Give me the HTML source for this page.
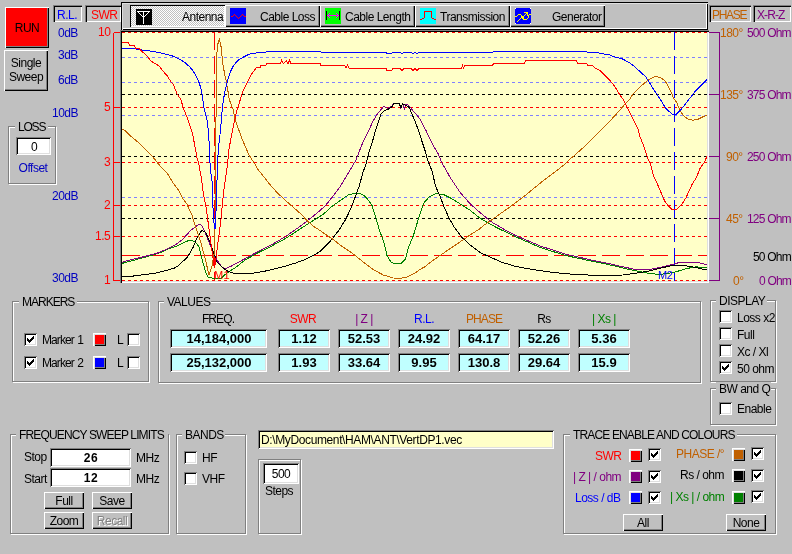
<!DOCTYPE html><html><head><meta charset="utf-8"><style>html,body{margin:0;padding:0;width:792px;height:554px;overflow:hidden;background:#c0c0c0;}body{position:relative;font-family:"Liberation Sans",sans-serif;font-size:11px;}.t{position:absolute;white-space:pre;line-height:12px;will-change:transform;}.b{position:absolute;box-sizing:border-box;}svg.b{overflow:visible}</style></head><body>
<div class="b" style="left:5px;top:7px;width:44px;height:41px;background:#ff0000;box-shadow:inset 1px 1px 0 #fff, inset -1px -1px 0 #000, inset -2px -2px 0 #808080;"></div>
<div class="t" style="top:22px;color:#000;font-size:12px;font-weight:400;letter-spacing:-0.5px;left:-73px;width:200px;text-align:center;">RUN</div>
<div class="b" style="left:4px;top:50px;width:44px;height:41px;background:#c0c0c0;box-shadow:inset 1px 1px 0 #fff, inset -1px -1px 0 #000, inset -2px -2px 0 #808080;"></div>
<div class="t" style="top:57px;color:#000;font-size:12px;font-weight:400;letter-spacing:-0.5px;left:-74px;width:200px;text-align:center;">Single</div>
<div class="t" style="top:71px;color:#000;font-size:12px;font-weight:400;letter-spacing:-0.5px;left:-74px;width:200px;text-align:center;">Sweep</div>
<div class="b" style="left:53px;top:5px;width:29px;height:17px;box-shadow:inset 1px 1px 0 #808080, inset 2px 2px 0 #000, inset -1px -1px 0 #fff;"></div>
<div class="t" style="top:9px;color:#0000ff;font-size:12px;font-weight:400;letter-spacing:-0.5px;left:57px;">R.L.</div>
<div class="b" style="left:85px;top:5px;width:36px;height:17px;box-shadow:inset 1px 1px 0 #808080, inset 2px 2px 0 #000, inset -1px -1px 0 #fff;"></div>
<div class="t" style="top:9px;color:#ff0000;font-size:12px;font-weight:400;letter-spacing:-0.5px;left:91px;">SWR</div>
<div class="b" style="left:709px;top:5px;width:42px;height:17px;box-shadow:inset 1px 1px 0 #808080, inset 2px 2px 0 #000, inset -1px -1px 0 #fff;"></div>
<div class="t" style="top:9px;color:#c06000;font-size:12px;font-weight:400;letter-spacing:-1.3px;left:712px;">PHASE</div>
<div class="b" style="left:753px;top:5px;width:38px;height:17px;box-shadow:inset 1px 1px 0 #808080, inset 2px 2px 0 #000, inset -1px -1px 0 #fff;"></div>
<div class="t" style="top:9px;color:#800080;font-size:12px;font-weight:400;letter-spacing:-0.9px;left:757px;">X-R-Z</div>
<div class="b" style="left:121px;top:2px;width:587px;height:28px;background:#c0c0c0;box-shadow:inset 1px 1px 0 #000, inset 2px 2px 0 #dfdfdf, inset -1px -1px 0 #000, inset -2px -2px 0 #fff;"></div>
<div class="b" style="left:130px;top:5px;width:95px;height:22px;background-color:#fff;background-image:linear-gradient(45deg,#c0c0c0 25%,transparent 25%,transparent 75%,#c0c0c0 75%),linear-gradient(45deg,#c0c0c0 25%,transparent 25%,transparent 75%,#c0c0c0 75%);background-size:2px 2px;background-position:0 0,1px 1px;box-shadow:inset 1px 1px 0 #000, inset -1px -1px 0 #fff;"></div>
<svg class="b" style="left:136px;top:9px" width="16" height="16" shape-rendering="crispEdges"><rect width="16" height="16" fill="#000"/><g fill="#fff"><rect x="1" y="2" width="1" height="1"/><rect x="2" y="2" width="1" height="1"/><rect x="3" y="2" width="1" height="1"/><rect x="4" y="2" width="1" height="1"/><rect x="5" y="2" width="1" height="1"/><rect x="6" y="2" width="1" height="1"/><rect x="7" y="2" width="1" height="1"/><rect x="8" y="2" width="1" height="1"/><rect x="9" y="2" width="1" height="1"/><rect x="10" y="2" width="1" height="1"/><rect x="11" y="2" width="1" height="1"/><rect x="12" y="2" width="1" height="1"/><rect x="13" y="2" width="1" height="1"/><rect x="7" y="2" width="1" height="1"/><rect x="7" y="3" width="1" height="1"/><rect x="7" y="4" width="1" height="1"/><rect x="7" y="5" width="1" height="1"/><rect x="7" y="6" width="1" height="1"/><rect x="7" y="7" width="1" height="1"/><rect x="7" y="8" width="1" height="1"/><rect x="7" y="9" width="1" height="1"/><rect x="7" y="10" width="1" height="1"/><rect x="7" y="11" width="1" height="1"/><rect x="7" y="12" width="1" height="1"/><rect x="7" y="13" width="1" height="1"/><rect x="7" y="14" width="1" height="1"/><rect x="2" y="3" width="1" height="1"/><rect x="3" y="4" width="1" height="1"/><rect x="4" y="5" width="1" height="1"/><rect x="5" y="6" width="1" height="1"/><rect x="6" y="7" width="1" height="1"/><rect x="12" y="3" width="1" height="1"/><rect x="11" y="4" width="1" height="1"/><rect x="10" y="5" width="1" height="1"/><rect x="9" y="6" width="1" height="1"/><rect x="8" y="7" width="1" height="1"/></g></svg>
<div class="t" style="top:11px;color:#000;font-size:12px;font-weight:400;letter-spacing:-0.5px;left:182px;">Antenna</div>
<div class="b" style="left:225px;top:5px;width:95px;height:22px;background:#c0c0c0;box-shadow:inset 1px 1px 0 #fff, inset -1px -1px 0 #000, inset -2px -2px 0 #808080;"></div>
<div class="b" style="left:320px;top:5px;width:95px;height:22px;background:#c0c0c0;box-shadow:inset 1px 1px 0 #fff, inset -1px -1px 0 #000, inset -2px -2px 0 #808080;"></div>
<div class="b" style="left:415px;top:5px;width:95px;height:22px;background:#c0c0c0;box-shadow:inset 1px 1px 0 #fff, inset -1px -1px 0 #000, inset -2px -2px 0 #808080;"></div>
<div class="b" style="left:510px;top:5px;width:95px;height:22px;background:#c0c0c0;box-shadow:inset 1px 1px 0 #fff, inset -1px -1px 0 #000, inset -2px -2px 0 #808080;"></div>
<svg class="b" style="left:230px;top:8px" width="16" height="16" shape-rendering="crispEdges"><rect width="16" height="16" fill="#0000ff"/><g fill="#ff0000"><rect x="1" y="8" width="1" height="1"/><rect x="2" y="8" width="1" height="1"/><rect x="2" y="8" width="1" height="1"/><rect x="3" y="7" width="1" height="1"/><rect x="4" y="6" width="1" height="1"/><rect x="4" y="6" width="1" height="1"/><rect x="5" y="7" width="1" height="1"/><rect x="6" y="8" width="1" height="1"/><rect x="7" y="9" width="1" height="1"/><rect x="8" y="10" width="1" height="1"/><rect x="8" y="10" width="1" height="1"/><rect x="9" y="9" width="1" height="1"/><rect x="10" y="8" width="1" height="1"/><rect x="11" y="7" width="1" height="1"/><rect x="12" y="6" width="1" height="1"/><rect x="12" y="6" width="1" height="1"/><rect x="13" y="7" width="1" height="1"/><rect x="14" y="8" width="1" height="1"/><rect x="14" y="8" width="1" height="1"/><rect x="15" y="8" width="1" height="1"/></g></svg>
<div class="t" style="top:11px;color:#000;font-size:12px;font-weight:400;letter-spacing:-0.5px;left:260px;">Cable Loss</div>
<svg class="b" style="left:325px;top:8px" width="16" height="16" shape-rendering="crispEdges"><rect width="16" height="16" fill="#00ff00"/><g fill="#000"><rect x="1" y="3" width="1" height="1"/><rect x="1" y="4" width="1" height="1"/><rect x="1" y="5" width="1" height="1"/><rect x="1" y="6" width="1" height="1"/><rect x="1" y="7" width="1" height="1"/><rect x="1" y="8" width="1" height="1"/><rect x="1" y="9" width="1" height="1"/><rect x="1" y="10" width="1" height="1"/><rect x="1" y="11" width="1" height="1"/><rect x="14" y="3" width="1" height="1"/><rect x="14" y="4" width="1" height="1"/><rect x="14" y="5" width="1" height="1"/><rect x="14" y="6" width="1" height="1"/><rect x="14" y="7" width="1" height="1"/><rect x="14" y="8" width="1" height="1"/><rect x="14" y="9" width="1" height="1"/><rect x="14" y="10" width="1" height="1"/><rect x="14" y="11" width="1" height="1"/></g></svg>
<svg class="b" style="left:325px;top:8px" width="16" height="16" shape-rendering="crispEdges"><g fill="#ff00ff"><rect x="2" y="7" width="1" height="1"/><rect x="3" y="7" width="1" height="1"/><rect x="4" y="7" width="1" height="1"/><rect x="5" y="7" width="1" height="1"/><rect x="6" y="7" width="1" height="1"/><rect x="7" y="7" width="1" height="1"/><rect x="8" y="7" width="1" height="1"/><rect x="9" y="7" width="1" height="1"/><rect x="10" y="7" width="1" height="1"/><rect x="11" y="7" width="1" height="1"/><rect x="12" y="7" width="1" height="1"/><rect x="13" y="7" width="1" height="1"/><rect x="3" y="6" width="1" height="1"/><rect x="3" y="8" width="1" height="1"/><rect x="4" y="5" width="1" height="1"/><rect x="4" y="9" width="1" height="1"/><rect x="12" y="6" width="1" height="1"/><rect x="12" y="8" width="1" height="1"/><rect x="11" y="5" width="1" height="1"/><rect x="11" y="9" width="1" height="1"/></g></svg>
<div class="t" style="top:11px;color:#000;font-size:12px;font-weight:400;letter-spacing:-0.5px;left:345px;">Cable Length</div>
<svg class="b" style="left:420px;top:8px" width="16" height="16" shape-rendering="crispEdges"><rect width="16" height="16" fill="#00ffff"/><g fill="#ff0000"><rect x="0" y="11" width="1" height="1"/><rect x="1" y="11" width="1" height="1"/><rect x="2" y="10" width="1" height="1"/><rect x="3" y="10" width="1" height="1"/><rect x="4" y="9" width="1" height="1"/><rect x="4" y="8" width="1" height="1"/><rect x="4" y="7" width="1" height="1"/><rect x="4" y="6" width="1" height="1"/><rect x="4" y="5" width="1" height="1"/><rect x="4" y="4" width="1" height="1"/><rect x="4" y="3" width="1" height="1"/><rect x="4" y="3" width="1" height="1"/><rect x="5" y="3" width="1" height="1"/><rect x="6" y="3" width="1" height="1"/><rect x="7" y="3" width="1" height="1"/><rect x="8" y="3" width="1" height="1"/><rect x="9" y="3" width="1" height="1"/><rect x="10" y="3" width="1" height="1"/><rect x="11" y="3" width="1" height="1"/><rect x="11" y="3" width="1" height="1"/><rect x="11" y="4" width="1" height="1"/><rect x="11" y="5" width="1" height="1"/><rect x="11" y="6" width="1" height="1"/><rect x="11" y="7" width="1" height="1"/><rect x="11" y="8" width="1" height="1"/><rect x="11" y="9" width="1" height="1"/><rect x="12" y="10" width="1" height="1"/><rect x="13" y="10" width="1" height="1"/><rect x="14" y="11" width="1" height="1"/><rect x="15" y="11" width="1" height="1"/></g></svg>
<div class="t" style="top:11px;color:#000;font-size:12px;font-weight:400;letter-spacing:-0.5px;left:440px;">Transmission</div>
<svg class="b" style="left:515px;top:8px" width="16" height="16" shape-rendering="crispEdges"><rect width="16" height="16" fill="#0000ff"/><rect x="0" y="0" width="1" height="1" fill="#fff"/><rect x="15" y="0" width="1" height="1" fill="#fff"/><rect x="0" y="15" width="1" height="1" fill="#fff"/><rect x="15" y="15" width="1" height="1" fill="#fff"/><g fill="#ffff00"><rect x="0" y="8" width="1" height="1"/><rect x="1" y="8" width="1" height="1"/><rect x="1" y="8" width="1" height="1"/><rect x="2" y="7" width="1" height="1"/><rect x="3" y="6" width="1" height="1"/><rect x="3" y="6" width="1" height="1"/><rect x="4" y="6" width="1" height="1"/><rect x="5" y="6" width="1" height="1"/><rect x="5" y="6" width="1" height="1"/><rect x="6" y="7" width="1" height="1"/><rect x="6" y="7" width="1" height="1"/><rect x="6" y="8" width="1" height="1"/><rect x="7" y="9" width="1" height="1"/><rect x="7" y="9" width="1" height="1"/><rect x="8" y="10" width="1" height="1"/><rect x="8" y="11" width="1" height="1"/><rect x="8" y="11" width="1" height="1"/><rect x="9" y="11" width="1" height="1"/><rect x="10" y="11" width="1" height="1"/><rect x="11" y="11" width="1" height="1"/><rect x="11" y="11" width="1" height="1"/><rect x="12" y="10" width="1" height="1"/><rect x="13" y="9" width="1" height="1"/><rect x="13" y="9" width="1" height="1"/><rect x="13" y="8" width="1" height="1"/><rect x="13" y="7" width="1" height="1"/><rect x="13" y="7" width="1" height="1"/><rect x="14" y="6" width="1" height="1"/><rect x="14" y="6" width="1" height="1"/><rect x="15" y="6" width="1" height="1"/><rect x="7" y="8" width="1" height="1"/><rect x="7" y="9" width="1" height="1"/><rect x="7" y="10" width="1" height="1"/><rect x="7" y="10" width="1" height="1"/><rect x="6" y="9" width="1" height="1"/><rect x="6" y="9" width="1" height="1"/><rect x="7" y="9" width="1" height="1"/><rect x="8" y="9" width="1" height="1"/><rect x="2" y="13" width="1" height="1"/><rect x="3" y="12" width="1" height="1"/><rect x="4" y="11" width="1" height="1"/><rect x="5" y="10" width="1" height="1"/><rect x="8" y="8" width="1" height="1"/><rect x="9" y="7" width="1" height="1"/><rect x="10" y="6" width="1" height="1"/><rect x="11" y="5" width="1" height="1"/><rect x="9" y="4" width="1" height="1"/><rect x="10" y="4" width="1" height="1"/><rect x="11" y="4" width="1" height="1"/><rect x="12" y="4" width="1" height="1"/><rect x="11" y="5" width="1" height="1"/><rect x="12" y="5" width="1" height="1"/><rect x="12" y="6" width="1" height="1"/><rect x="12" y="7" width="1" height="1"/></g></svg>
<div class="t" style="top:11px;color:#000;font-size:12px;font-weight:400;letter-spacing:-0.5px;left:552px;">Generator</div>
<div class="b" style="left:120px;top:30px;width:589px;height:253px;background:#ffffc8;box-shadow:inset 1px 1px 0 #808080, inset 2px 2px 0 #000, inset -1px -1px 0 #fff, inset -2px -2px 0 #dfdfdf;"></div>
<svg class="b" style="left:120px;top:30px" width="589" height="253" viewBox="120 30 589 253">
<defs><clipPath id="c"><rect x="122" y="32" width="585" height="249"/></clipPath></defs>
<g clip-path="url(#c)" shape-rendering="crispEdges">
<line x1="122" y1="57.5" x2="707" y2="57.5" stroke="#8080ff" stroke-width="1" stroke-dasharray="3 3" stroke-dashoffset="0"/>
<line x1="122" y1="82.5" x2="707" y2="82.5" stroke="#8080ff" stroke-width="1" stroke-dasharray="3 3" stroke-dashoffset="0"/>
<line x1="122" y1="115.5" x2="707" y2="115.5" stroke="#8080ff" stroke-width="1" stroke-dasharray="3 3" stroke-dashoffset="0"/>
<line x1="122" y1="197.5" x2="707" y2="197.5" stroke="#8080ff" stroke-width="1" stroke-dasharray="3 3" stroke-dashoffset="0"/>
<line x1="122" y1="94.5" x2="707" y2="94.5" stroke="#000" stroke-width="1" stroke-dasharray="3 3" stroke-dashoffset="0"/>
<line x1="122" y1="156.5" x2="707" y2="156.5" stroke="#000" stroke-width="1" stroke-dasharray="3 3" stroke-dashoffset="0"/>
<line x1="122" y1="218.5" x2="707" y2="218.5" stroke="#000" stroke-width="1" stroke-dasharray="3 3" stroke-dashoffset="0"/>
<line x1="122" y1="32.5" x2="707" y2="32.5" stroke="#ff0000" stroke-width="1" stroke-dasharray="3 3" stroke-dashoffset="0"/>
<line x1="122" y1="107.5" x2="707" y2="107.5" stroke="#ff0000" stroke-width="1" stroke-dasharray="3 3" stroke-dashoffset="0"/>
<line x1="122" y1="162.5" x2="707" y2="162.5" stroke="#ff0000" stroke-width="1" stroke-dasharray="3 3" stroke-dashoffset="0"/>
<line x1="122" y1="205.5" x2="707" y2="205.5" stroke="#ff0000" stroke-width="1" stroke-dasharray="3 3" stroke-dashoffset="0"/>
<line x1="122" y1="236.5" x2="707" y2="236.5" stroke="#ff0000" stroke-width="1" stroke-dasharray="3 3" stroke-dashoffset="0"/>
<line x1="122" y1="280.5" x2="707" y2="280.5" stroke="#ff0000" stroke-width="1" stroke-dasharray="3 3" stroke-dashoffset="0"/>
<line x1="122" y1="255.5" x2="707" y2="255.5" stroke="#ff0000" stroke-width="1" stroke-dasharray="18 6" stroke-dashoffset="0"/>
<line x1="214.5" y1="32" x2="214.5" y2="281" stroke="#ff0000" stroke-width="1" stroke-dasharray="18 6"/>
<line x1="674.5" y1="32" x2="674.5" y2="281" stroke="#0000ff" stroke-width="1" stroke-dasharray="18 6"/>
</g>
<g clip-path="url(#c)" fill="none" stroke-width="1" shape-rendering="crispEdges">
<polyline points="122.0,263.4 137.7,259.2 157.9,253.6 168.0,249.1 176.9,246.0 185.7,241.5 190.0,240.3 195.1,241.5 198.9,246.6 201.4,256.7 205.2,270.6 207.7,276.9 212.8,278.1 217.8,278.8 221.6,278.1 225.4,274.3 230.5,270.6 235.0,268.0 245.2,259.9 257.8,252.9 271.7,246.0 285.6,238.4 298.3,230.2 310.9,222.0 318.5,217.5 323.6,214.0 331.3,206.8 337.6,202.4 344.0,197.9 348.4,194.8 356.6,193.1 360.4,193.5 365.5,196.7 371.8,204.9 375.6,216.9 379.4,230.0 384.4,244.1 387.0,255.5 390.7,261.8 393.9,263.3 400.9,263.7 405.3,259.2 408.4,247.9 413.5,235.2 418.6,218.2 422.3,206.8 423.8,203.0 428.8,197.3 436.4,193.5 444.0,194.8 451.6,198.6 461.7,204.9 470.6,210.6 478.2,216.9 488.3,223.2 498.4,228.5 508.5,233.3 515.0,236.5 540.3,247.5 565.6,255.5 590.9,261.0 610.0,264.9 629.0,269.4 647.9,273.2 658.0,274.4 665.6,273.8 675.7,271.9 685.9,268.7 696.0,266.8 706.7,267.8" stroke="#008000"/>
<polyline points="122.0,262.4 127.6,260.5 137.7,258.2 147.8,255.7 157.9,252.9 166.8,249.1 175.6,244.7 183.2,239.0 190.0,231.0 195.1,227.0 198.9,224.1 202.0,225.7 205.8,234.0 210.3,245.3 214.7,256.7 221.6,266.8 225.4,268.7 230.5,266.5 245.2,258.6 257.8,251.7 271.7,244.7 285.6,236.5 298.3,227.6 305.9,221.9 314.7,215.0 318.5,211.8 325.0,206.1 332.6,196.7 340.2,186.5 345.2,178.3 351.5,167.6 356.0,160.0 357.6,155.7 362.6,143.0 367.7,132.9 372.8,121.5 376.5,115.2 381.0,109.5 383.5,106.6 385.4,107.0 387.9,108.3 391.7,106.4 393.0,103.8 399.3,103.8 400.6,107.6 402.5,103.8 404.4,108.9 405.6,104.5 408.2,105.1 410.7,107.6 413.2,111.4 417.0,115.2 420.8,120.3 425.9,130.4 429.6,138.0 433.4,145.6 438.5,154.4 441.5,162.0 450.3,177.7 460.5,192.9 470.6,204.2 480.7,213.1 490.8,221.5 503.4,228.9 506.0,230.5 515.0,235.2 540.3,246.0 565.6,254.2 590.9,259.9 610.0,263.8 622.6,266.8 635.3,269.4 650.5,269.4 663.1,266.8 673.2,264.3 679.5,262.4 697.2,262.4 706.7,264.6" stroke="#800080"/>
<polyline points="122.0,276.6 131.4,276.3 145.3,274.4 155.4,273.2 165.5,270.6 174.4,268.1 179.4,264.9 183.2,261.1 187.0,257.4 190.0,252.9 193.2,247.2 197.6,236.5 202.0,230.2 205.8,232.7 210.3,242.8 214.7,255.4 216.6,261.7 221.6,266.8 226.7,270.6 230.5,272.4 235.1,273.4 252.8,273.2 267.9,270.6 283.1,266.8 295.7,263.0 305.9,259.2 314.7,254.8 319.8,251.7 324.8,246.6 329.9,241.5 332.6,238.4 338.9,230.2 345.2,220.1 347.8,215.0 351.5,206.8 355.3,196.7 359.1,186.5 362.9,172.6 366.4,163.0 369.0,151.9 372.1,143.0 374.7,132.9 377.2,125.3 381.0,114.0 384.1,110.8 387.9,109.5 391.7,107.0 393.6,103.8 399.3,103.8 401.0,108.0 402.5,103.8 405.6,105.1 409.4,107.6 411.9,114.0 415.7,122.8 418.9,131.7 422.1,141.8 425.9,153.2 427.6,160.0 432.6,172.6 435.2,185.3 440.2,196.7 444.0,206.8 449.1,218.2 454.1,227.0 461.7,237.1 470.6,245.3 480.7,252.9 490.8,257.4 502.2,262.4 515.0,266.2 527.6,268.7 540.3,270.6 552.9,272.5 571.9,274.2 595.9,275.4 614.9,275.4 622.6,275.0 635.3,273.2 647.9,271.3 660.6,268.1 673.2,265.3 682.1,265.3 692.2,266.8 706.7,270.0" stroke="#000000"/>
<polyline points="122.0,129.1 125.1,130.4 131.4,136.7 139.0,143.0 145.3,149.4 151.6,155.7 155.4,160.0 157.9,163.3 160.5,166.3 166.8,172.6 173.1,182.8 179.4,191.6 183.2,199.2 187.0,204.2 192.1,215.6 195.2,225.7 200.2,240.3 205.0,258.0 209.0,275.0 212.1,265.5 214.3,252.9 215.0,230.0 215.3,200.0 215.4,151.9 216.4,95.0 216.5,59.1 217.5,45.2 219.3,39.5 221.3,47.7 222.6,62.9 224.7,74.2 226.6,83.1 228.1,92.0 229.4,100.0 232.9,108.9 235.4,120.3 241.7,138.0 248.7,154.4 252.1,160.0 255.6,165.0 256.5,167.6 261.6,173.9 270.5,185.3 278.0,193.5 285.6,200.5 297.0,210.6 302.1,215.0 305.9,219.4 313.4,226.4 318.5,229.5 325.0,234.0 332.6,239.0 341.4,246.0 352.8,253.6 362.9,261.8 373.0,269.4 383.2,275.0 393.3,278.0 400.9,278.2 407.2,277.0 416.0,272.5 420.0,269.4 424.9,266.8 430.1,262.4 442.8,253.6 457.9,243.4 470.6,234.6 479.4,229.0 483.2,225.8 495.9,216.9 498.4,215.0 508.5,208.0 515.0,203.0 520.0,199.5 527.6,193.5 541.5,182.1 555.5,171.4 564.0,165.0 568.7,160.0 574.1,155.7 584.2,146.8 590.6,140.5 598.2,132.9 607.0,124.1 615.9,114.6 624.7,104.5 629.2,100.0 632.3,95.0 636.3,90.7 641.4,85.6 647.7,80.6 652.8,77.4 656.5,76.5 661.0,77.8 664.8,80.6 667.9,85.6 671.1,92.0 673.6,98.3 676.7,102.6 679.8,110.2 683.6,115.8 688.0,119.0 693.1,120.3 698.1,119.2 703.2,116.7 707.0,115.2" stroke="#c06000"/>
<polyline points="122.0,48.6 134.5,48.6 139.0,49.6 149.7,50.9 156.7,52.1 162.4,53.4 170.6,55.3 175.6,57.2 179.4,59.1 185.7,63.1 189.5,66.7 192.7,70.5 195.9,75.5 198.4,80.6 200.3,86.3 201.9,93.2 202.2,95.0 204.1,108.9 207.2,120.3 208.5,132.9 209.6,150.0 210.2,168.9 212.1,181.6 212.7,202.4 213.7,220.0 214.6,228.5 215.5,228.0 215.5,220.0 216.5,203.0 217.1,176.5 217.8,158.8 218.3,149.4 220.2,132.9 222.1,111.4 223.4,100.0 225.3,89.4 227.6,80.6 230.4,71.7 233.6,65.4 238.0,60.3 243.0,57.2 248.1,54.7 251.9,53.4 255.7,53.4 256.5,52.5 265.8,52.5 266.5,51.5 320.8,51.5 321.5,52.5 386.0,52.5 386.5,53.4 391.8,53.4 392.5,52.5 400.0,52.5 402.0,53.4 404.0,52.5 411.0,52.5 413.0,53.4 415.0,52.5 417.0,53.4 419.0,52.5 492.8,52.5 493.5,51.5 586.8,51.5 587.5,52.5 597.6,52.5 600.0,53.4 609.6,55.0 614.6,56.8 622.2,58.8 628.6,62.2 634.9,66.7 641.4,73.0 645.2,76.1 649.0,81.8 652.8,88.2 656.5,93.5 661.5,101.3 665.3,107.6 669.1,111.4 672.9,114.6 676.0,114.6 680.5,110.2 685.5,103.8 692.4,95.0 694.5,92.0 699.5,86.9 707.0,79.3" stroke="#0000ff"/>
<polyline points="122.0,42.5 128.5,42.5 129.5,45.4 134.5,45.4 135.5,48.3 139.0,48.5 142.8,52.1 146.5,55.3 150.3,60.3 154.1,63.1 159.2,66.0 163.0,71.1 167.4,76.1 170.6,81.2 173.7,85.0 176.9,93.8 180.7,99.0 183.2,107.6 187.0,117.1 190.2,126.6 192.7,134.2 195.2,148.1 197.1,158.2 198.8,163.9 201.5,179.0 202.6,187.9 203.4,194.1 205.8,205.6 206.3,208.0 207.9,220.7 214.0,265.5 214.5,266.5 215.0,265.5 220.9,220.0 222.2,205.6 224.1,187.9 227.2,167.0 229.1,148.1 231.6,135.5 234.1,122.8 236.7,111.4 241.7,95.0 242.4,92.0 246.8,83.1 250.6,75.5 252.5,73.0 256.3,67.9 260.1,67.9 261.0,65.4 265.8,65.4 266.5,63.5 280.3,63.5 281.6,60.5 283.5,63.5 286.3,60.5 288.0,63.5 289.5,60.5 291.0,63.5 320.2,63.5 321.0,65.4 344.8,65.4 346.0,67.9 347.5,65.4 349.0,68.2 386.0,68.2 387.0,70.5 391.8,70.5 392.5,68.2 400.0,68.2 402.0,70.5 404.0,68.2 411.0,68.2 413.0,70.5 415.0,68.2 417.0,70.5 419.0,68.2 461.5,68.2 462.5,65.4 463.5,68.2 465.0,65.4 492.5,65.4 493.5,63.5 524.5,63.5 525.5,60.6 576.5,60.6 577.5,63.5 586.6,63.5 587.5,65.4 592.5,65.4 595.0,67.9 598.2,69.4 600.7,71.1 604.5,74.9 608.3,78.7 612.1,83.1 615.9,88.2 619.7,94.5 623.5,100.0 627.2,107.6 631.0,115.2 634.8,122.8 638.0,129.1 640.0,136.7 644.5,148.0 647.6,158.1 650.5,163.8 653.6,176.4 657.4,184.0 660.6,191.6 664.4,200.5 667.5,204.9 672.0,209.3 676.4,209.3 681.4,204.9 685.9,197.9 692.2,184.0 696.0,178.3 700.4,167.6 704.2,162.5 705.4,160.0 707.0,156.2" stroke="#ff0000"/>
</g>
</svg>
<svg class="b" style="left:105px;top:28px" width="20" height="260"><g shape-rendering="crispEdges" stroke="#ff0000" stroke-width="1"><path d="M8.5 4.5h6M8.5 4.5v248M8.5 252.5h6M8.5 79.5h6M8.5 134.5h6M8.5 177.5h6M8.5 208.5h6" fill="none"/></g></svg>
<svg class="b" style="left:705px;top:28px" width="20" height="260"><g shape-rendering="crispEdges" stroke="#800080" stroke-width="1"><path d="M4 4.5h10.5v248H4M4 66.5h10M4 128.5h10M4 190.5h10" fill="none"/></g></svg>
<div class="t" style="left:214px;top:269px;color:#ff0000;font-size:11px;letter-spacing:0.3px">M1</div>
<div class="t" style="left:658px;top:269px;color:#0000ff;font-size:11px;letter-spacing:-0.3px">M2</div>
<div class="t" style="top:27px;color:#0000c0;font-size:12px;font-weight:400;letter-spacing:-0.5px;right:714px;">0dB</div>
<div class="t" style="top:49px;color:#0000c0;font-size:12px;font-weight:400;letter-spacing:-0.5px;right:714px;">3dB</div>
<div class="t" style="top:74px;color:#0000c0;font-size:12px;font-weight:400;letter-spacing:-0.5px;right:714px;">6dB</div>
<div class="t" style="top:107px;color:#0000c0;font-size:12px;font-weight:400;letter-spacing:-0.5px;right:714px;">10dB</div>
<div class="t" style="top:190px;color:#0000c0;font-size:12px;font-weight:400;letter-spacing:-0.5px;right:714px;">20dB</div>
<div class="t" style="top:272px;color:#0000c0;font-size:12px;font-weight:400;letter-spacing:-0.5px;right:714px;">30dB</div>
<div class="t" style="top:26px;color:#ff0000;font-size:12px;font-weight:400;letter-spacing:-0.5px;right:682px;">10</div>
<div class="t" style="top:101px;color:#ff0000;font-size:12px;font-weight:400;letter-spacing:-0.5px;right:682px;">5</div>
<div class="t" style="top:156px;color:#ff0000;font-size:12px;font-weight:400;letter-spacing:-0.5px;right:682px;">3</div>
<div class="t" style="top:199px;color:#ff0000;font-size:12px;font-weight:400;letter-spacing:-0.5px;right:682px;">2</div>
<div class="t" style="top:230px;color:#ff0000;font-size:12px;font-weight:400;letter-spacing:-0.5px;right:682px;">1.5</div>
<div class="t" style="top:274px;color:#ff0000;font-size:12px;font-weight:400;letter-spacing:-0.5px;right:682px;">1</div>
<div class="t" style="top:27px;color:#c06000;font-size:12px;font-weight:400;letter-spacing:-0.5px;right:49px;">180°</div>
<div class="t" style="top:27px;color:#800080;font-size:12px;font-weight:400;letter-spacing:-0.8px;right:1px;">500 Ohm</div>
<div class="t" style="top:89px;color:#c06000;font-size:12px;font-weight:400;letter-spacing:-0.5px;right:49px;">135°</div>
<div class="t" style="top:89px;color:#800080;font-size:12px;font-weight:400;letter-spacing:-0.8px;right:1px;">375 Ohm</div>
<div class="t" style="top:151px;color:#c06000;font-size:12px;font-weight:400;letter-spacing:-0.5px;right:49px;">90°</div>
<div class="t" style="top:151px;color:#800080;font-size:12px;font-weight:400;letter-spacing:-0.8px;right:1px;">250 Ohm</div>
<div class="t" style="top:213px;color:#c06000;font-size:12px;font-weight:400;letter-spacing:-0.5px;right:49px;">45°</div>
<div class="t" style="top:213px;color:#800080;font-size:12px;font-weight:400;letter-spacing:-0.8px;right:1px;">125 Ohm</div>
<div class="t" style="top:275px;color:#c06000;font-size:12px;font-weight:400;letter-spacing:-0.5px;right:49px;">0°</div>
<div class="t" style="top:275px;color:#800080;font-size:12px;font-weight:400;letter-spacing:-0.8px;right:1px;">0 Ohm</div>
<div class="t" style="top:251px;color:#000;font-size:12px;font-weight:400;letter-spacing:-0.8px;right:1px;">50 Ohm</div>
<div class="b" style="left:8px;top:126px;width:48px;height:58px;border:1px solid #808080;border-width:1px 1px 1px 1px;box-shadow:inset 1px 1px 0 #fff, 1px 1px 0 #fff;box-sizing:border-box"></div>
<div class="b" style="left:15px;top:120px;width:33px;height:10px;background:#c0c0c0"></div>
<div class="t" style="top:121px;color:#000;font-size:12px;font-weight:400;letter-spacing:-1.2px;left:18px;">LOSS</div>
<div class="b" style="left:16px;top:137px;width:35px;height:18px;background:#fff;box-shadow:inset 1px 1px 0 #808080, inset -1px -1px 0 #fff, inset 2px 2px 0 #000, inset -2px -2px 0 #dfdfdf;"></div>
<div class="t" style="top:141px;color:#000;font-size:12px;font-weight:400;letter-spacing:-0.5px;left:-66.5px;width:200px;text-align:center;">0</div>
<div class="t" style="top:162px;color:#0000c0;font-size:12px;font-weight:400;letter-spacing:-0.5px;left:-67px;width:200px;text-align:center;">Offset</div>
<div class="b" style="left:12px;top:301px;width:137px;height:81px;border:1px solid #808080;border-width:1px 1px 1px 1px;box-shadow:inset 1px 1px 0 #fff, 1px 1px 0 #fff;box-sizing:border-box"></div>
<div class="b" style="left:19px;top:295px;width:58px;height:10px;background:#c0c0c0"></div>
<div class="t" style="top:296px;color:#000;font-size:12px;font-weight:400;letter-spacing:-1.0px;left:22px;">MARKERS</div>
<div class="b" style="left:24px;top:333px;width:13px;height:13px;background:#fff;box-shadow:inset 1px 1px 0 #808080, inset -1px -1px 0 #fff, inset 2px 2px 0 #000, inset -2px -2px 0 #dfdfdf;"></div>
<svg class="b" style="left:24px;top:333px" width="13" height="13" viewBox="0 0 13 13" shape-rendering="crispEdges"><path d="M9 3h1v1h-1zM8 4h2v1h-2zM3 5h1v1h-1zM7 5h3v1h-3zM3 6h2v1h-2zM6 6h3v1h-3zM3 7h5v1h-5zM4 8h3v1h-3zM5 9h1v1h-1z" fill="#000"/></svg>
<div class="t" style="top:334px;color:#000;font-size:12px;font-weight:400;letter-spacing:-0.9px;left:42px;word-spacing:1px;">Marker 1</div>
<div class="b" style="left:93px;top:333px;width:13px;height:13px;background:#ff0000;box-shadow:inset 1px 1px 0 #fff, inset 2px 2px 0 #dfdfdf, inset -1px -1px 0 #000, inset -2px -2px 0 #808080;"></div>
<div class="t" style="top:334px;color:#000;font-size:12px;font-weight:400;letter-spacing:-0.5px;left:117px;">L</div>
<div class="b" style="left:127px;top:333px;width:13px;height:13px;background:#fff;box-shadow:inset 1px 1px 0 #808080, inset -1px -1px 0 #fff, inset 2px 2px 0 #000, inset -2px -2px 0 #dfdfdf;"></div>
<div class="b" style="left:24px;top:356px;width:13px;height:13px;background:#fff;box-shadow:inset 1px 1px 0 #808080, inset -1px -1px 0 #fff, inset 2px 2px 0 #000, inset -2px -2px 0 #dfdfdf;"></div>
<svg class="b" style="left:24px;top:356px" width="13" height="13" viewBox="0 0 13 13" shape-rendering="crispEdges"><path d="M9 3h1v1h-1zM8 4h2v1h-2zM3 5h1v1h-1zM7 5h3v1h-3zM3 6h2v1h-2zM6 6h3v1h-3zM3 7h5v1h-5zM4 8h3v1h-3zM5 9h1v1h-1z" fill="#000"/></svg>
<div class="t" style="top:357px;color:#000;font-size:12px;font-weight:400;letter-spacing:-0.9px;left:42px;word-spacing:1px;">Marker 2</div>
<div class="b" style="left:93px;top:356px;width:13px;height:13px;background:#0000ff;box-shadow:inset 1px 1px 0 #fff, inset 2px 2px 0 #dfdfdf, inset -1px -1px 0 #000, inset -2px -2px 0 #808080;"></div>
<div class="t" style="top:357px;color:#000;font-size:12px;font-weight:400;letter-spacing:-0.5px;left:117px;">L</div>
<div class="b" style="left:127px;top:356px;width:13px;height:13px;background:#fff;box-shadow:inset 1px 1px 0 #808080, inset -1px -1px 0 #fff, inset 2px 2px 0 #000, inset -2px -2px 0 #dfdfdf;"></div>
<div class="b" style="left:158px;top:301px;width:543px;height:82px;border:1px solid #808080;border-width:1px 1px 1px 1px;box-shadow:inset 1px 1px 0 #fff, 1px 1px 0 #fff;box-sizing:border-box"></div>
<div class="b" style="left:164px;top:295px;width:47px;height:10px;background:#c0c0c0"></div>
<div class="t" style="top:296px;color:#000;font-size:12px;font-weight:400;letter-spacing:-0.5px;left:167px;">VALUES</div>
<div class="t" style="top:313px;color:#000;font-size:12px;font-weight:400;letter-spacing:-0.9px;left:118px;width:200px;text-align:center;">FREQ.</div>
<div class="t" style="top:313px;color:#ff0000;font-size:12px;font-weight:400;letter-spacing:-0.5px;left:203px;width:200px;text-align:center;">SWR</div>
<div class="t" style="top:313px;color:#800080;font-size:12px;font-weight:400;letter-spacing:-0.5px;left:264px;width:200px;text-align:center;">| Z |</div>
<div class="t" style="top:313px;color:#0000ff;font-size:12px;font-weight:400;letter-spacing:-0.5px;left:324px;width:200px;text-align:center;">R.L.</div>
<div class="t" style="top:313px;color:#c06000;font-size:12px;font-weight:400;letter-spacing:-0.9px;left:384px;width:200px;text-align:center;">PHASE</div>
<div class="t" style="top:313px;color:#000;font-size:12px;font-weight:400;letter-spacing:-0.5px;left:444px;width:200px;text-align:center;">Rs</div>
<div class="t" style="top:313px;color:#008000;font-size:12px;font-weight:400;letter-spacing:-0.5px;left:504px;width:200px;text-align:center;">| Xs |</div>
<div class="b" style="left:170px;top:329px;width:97px;height:19px;background:#c0ffff;box-shadow:inset 1px 1px 0 #808080, inset -1px -1px 0 #fff, inset 2px 2px 0 #000, inset -2px -2px 0 #dfdfdf;"></div>
<div class="t" style="top:333px;color:#000;font-size:13px;font-weight:700;left:118.5px;width:200px;text-align:center;">14,184,000</div>
<div class="b" style="left:278px;top:329px;width:52px;height:19px;background:#c0ffff;box-shadow:inset 1px 1px 0 #808080, inset -1px -1px 0 #fff, inset 2px 2px 0 #000, inset -2px -2px 0 #dfdfdf;"></div>
<div class="t" style="top:333px;color:#000;font-size:13px;font-weight:700;left:204.0px;width:200px;text-align:center;">1.12</div>
<div class="b" style="left:338px;top:329px;width:52px;height:19px;background:#c0ffff;box-shadow:inset 1px 1px 0 #808080, inset -1px -1px 0 #fff, inset 2px 2px 0 #000, inset -2px -2px 0 #dfdfdf;"></div>
<div class="t" style="top:333px;color:#000;font-size:13px;font-weight:700;left:264.0px;width:200px;text-align:center;">52.53</div>
<div class="b" style="left:398px;top:329px;width:52px;height:19px;background:#c0ffff;box-shadow:inset 1px 1px 0 #808080, inset -1px -1px 0 #fff, inset 2px 2px 0 #000, inset -2px -2px 0 #dfdfdf;"></div>
<div class="t" style="top:333px;color:#000;font-size:13px;font-weight:700;left:324.0px;width:200px;text-align:center;">24.92</div>
<div class="b" style="left:458px;top:329px;width:52px;height:19px;background:#c0ffff;box-shadow:inset 1px 1px 0 #808080, inset -1px -1px 0 #fff, inset 2px 2px 0 #000, inset -2px -2px 0 #dfdfdf;"></div>
<div class="t" style="top:333px;color:#000;font-size:13px;font-weight:700;left:384.0px;width:200px;text-align:center;">64.17</div>
<div class="b" style="left:518px;top:329px;width:52px;height:19px;background:#c0ffff;box-shadow:inset 1px 1px 0 #808080, inset -1px -1px 0 #fff, inset 2px 2px 0 #000, inset -2px -2px 0 #dfdfdf;"></div>
<div class="t" style="top:333px;color:#000;font-size:13px;font-weight:700;left:444.0px;width:200px;text-align:center;">52.26</div>
<div class="b" style="left:578px;top:329px;width:52px;height:19px;background:#c0ffff;box-shadow:inset 1px 1px 0 #808080, inset -1px -1px 0 #fff, inset 2px 2px 0 #000, inset -2px -2px 0 #dfdfdf;"></div>
<div class="t" style="top:333px;color:#000;font-size:13px;font-weight:700;left:504.0px;width:200px;text-align:center;">5.36</div>
<div class="b" style="left:170px;top:353px;width:97px;height:19px;background:#c0ffff;box-shadow:inset 1px 1px 0 #808080, inset -1px -1px 0 #fff, inset 2px 2px 0 #000, inset -2px -2px 0 #dfdfdf;"></div>
<div class="t" style="top:357px;color:#000;font-size:13px;font-weight:700;left:118.5px;width:200px;text-align:center;">25,132,000</div>
<div class="b" style="left:278px;top:353px;width:52px;height:19px;background:#c0ffff;box-shadow:inset 1px 1px 0 #808080, inset -1px -1px 0 #fff, inset 2px 2px 0 #000, inset -2px -2px 0 #dfdfdf;"></div>
<div class="t" style="top:357px;color:#000;font-size:13px;font-weight:700;left:204.0px;width:200px;text-align:center;">1.93</div>
<div class="b" style="left:338px;top:353px;width:52px;height:19px;background:#c0ffff;box-shadow:inset 1px 1px 0 #808080, inset -1px -1px 0 #fff, inset 2px 2px 0 #000, inset -2px -2px 0 #dfdfdf;"></div>
<div class="t" style="top:357px;color:#000;font-size:13px;font-weight:700;left:264.0px;width:200px;text-align:center;">33.64</div>
<div class="b" style="left:398px;top:353px;width:52px;height:19px;background:#c0ffff;box-shadow:inset 1px 1px 0 #808080, inset -1px -1px 0 #fff, inset 2px 2px 0 #000, inset -2px -2px 0 #dfdfdf;"></div>
<div class="t" style="top:357px;color:#000;font-size:13px;font-weight:700;left:324.0px;width:200px;text-align:center;">9.95</div>
<div class="b" style="left:458px;top:353px;width:52px;height:19px;background:#c0ffff;box-shadow:inset 1px 1px 0 #808080, inset -1px -1px 0 #fff, inset 2px 2px 0 #000, inset -2px -2px 0 #dfdfdf;"></div>
<div class="t" style="top:357px;color:#000;font-size:13px;font-weight:700;left:384.0px;width:200px;text-align:center;">130.8</div>
<div class="b" style="left:518px;top:353px;width:52px;height:19px;background:#c0ffff;box-shadow:inset 1px 1px 0 #808080, inset -1px -1px 0 #fff, inset 2px 2px 0 #000, inset -2px -2px 0 #dfdfdf;"></div>
<div class="t" style="top:357px;color:#000;font-size:13px;font-weight:700;left:444.0px;width:200px;text-align:center;">29.64</div>
<div class="b" style="left:578px;top:353px;width:52px;height:19px;background:#c0ffff;box-shadow:inset 1px 1px 0 #808080, inset -1px -1px 0 #fff, inset 2px 2px 0 #000, inset -2px -2px 0 #dfdfdf;"></div>
<div class="t" style="top:357px;color:#000;font-size:13px;font-weight:700;left:504.0px;width:200px;text-align:center;">15.9</div>
<div class="b" style="left:710px;top:300px;width:66px;height:82px;border:1px solid #808080;border-width:1px 1px 1px 1px;box-shadow:inset 1px 1px 0 #fff, 1px 1px 0 #fff;box-sizing:border-box"></div>
<div class="b" style="left:716px;top:294px;width:51px;height:10px;background:#c0c0c0"></div>
<div class="t" style="top:295px;color:#000;font-size:12px;font-weight:400;letter-spacing:-0.5px;left:719px;">DISPLAY</div>
<div class="b" style="left:719px;top:310px;width:13px;height:13px;background:#fff;box-shadow:inset 1px 1px 0 #808080, inset -1px -1px 0 #fff, inset 2px 2px 0 #000, inset -2px -2px 0 #dfdfdf;"></div>
<div class="t" style="top:312px;color:#000;font-size:12px;font-weight:400;letter-spacing:-0.5px;left:737px;">Loss x2</div>
<div class="b" style="left:719px;top:327px;width:13px;height:13px;background:#fff;box-shadow:inset 1px 1px 0 #808080, inset -1px -1px 0 #fff, inset 2px 2px 0 #000, inset -2px -2px 0 #dfdfdf;"></div>
<div class="t" style="top:329px;color:#000;font-size:12px;font-weight:400;letter-spacing:-0.5px;left:737px;">Full</div>
<div class="b" style="left:719px;top:344px;width:13px;height:13px;background:#fff;box-shadow:inset 1px 1px 0 #808080, inset -1px -1px 0 #fff, inset 2px 2px 0 #000, inset -2px -2px 0 #dfdfdf;"></div>
<div class="t" style="top:346px;color:#000;font-size:12px;font-weight:400;letter-spacing:-0.5px;left:737px;">Xc / Xl</div>
<div class="b" style="left:719px;top:361px;width:13px;height:13px;background:#fff;box-shadow:inset 1px 1px 0 #808080, inset -1px -1px 0 #fff, inset 2px 2px 0 #000, inset -2px -2px 0 #dfdfdf;"></div>
<svg class="b" style="left:719px;top:361px" width="13" height="13" viewBox="0 0 13 13" shape-rendering="crispEdges"><path d="M9 3h1v1h-1zM8 4h2v1h-2zM3 5h1v1h-1zM7 5h3v1h-3zM3 6h2v1h-2zM6 6h3v1h-3zM3 7h5v1h-5zM4 8h3v1h-3zM5 9h1v1h-1z" fill="#000"/></svg>
<div class="t" style="top:363px;color:#000;font-size:12px;font-weight:400;letter-spacing:-0.5px;left:737px;">50 ohm</div>
<div class="b" style="left:710px;top:388px;width:66px;height:37px;border:1px solid #808080;border-width:1px 1px 1px 1px;box-shadow:inset 1px 1px 0 #fff, 1px 1px 0 #fff;box-sizing:border-box"></div>
<div class="b" style="left:716px;top:382px;width:55px;height:10px;background:#c0c0c0"></div>
<div class="t" style="top:383px;color:#000;font-size:12px;font-weight:400;letter-spacing:-0.5px;left:719px;">BW and Q</div>
<div class="b" style="left:719px;top:402px;width:13px;height:13px;background:#fff;box-shadow:inset 1px 1px 0 #808080, inset -1px -1px 0 #fff, inset 2px 2px 0 #000, inset -2px -2px 0 #dfdfdf;"></div>
<div class="t" style="top:403px;color:#000;font-size:12px;font-weight:400;letter-spacing:-0.5px;left:737px;">Enable</div>
<div class="b" style="left:10px;top:434px;width:159px;height:100px;border:1px solid #808080;border-width:1px 1px 1px 1px;box-shadow:inset 1px 1px 0 #fff, 1px 1px 0 #fff;box-sizing:border-box"></div>
<div class="b" style="left:16px;top:428px;width:152px;height:10px;background:#c0c0c0"></div>
<div class="t" style="top:429px;color:#000;font-size:12px;font-weight:400;letter-spacing:-0.85px;left:19px;">FREQUENCY SWEEP LIMITS</div>
<div class="t" style="top:451px;color:#000;font-size:12px;font-weight:400;letter-spacing:-0.5px;left:24px;">Stop</div>
<div class="b" style="left:50px;top:448px;width:81px;height:19px;background:#fff;box-shadow:inset 1px 1px 0 #808080, inset -1px -1px 0 #fff, inset 2px 2px 0 #000, inset -2px -2px 0 #dfdfdf;"></div>
<div class="t" style="top:452px;color:#000;font-size:12px;font-weight:700;letter-spacing:0.6px;left:-9px;width:200px;text-align:center;">26</div>
<div class="t" style="top:452px;color:#000;font-size:12px;font-weight:400;letter-spacing:-0.5px;left:136px;">MHz</div>
<div class="t" style="top:473px;color:#000;font-size:12px;font-weight:400;letter-spacing:-0.5px;left:24px;">Start</div>
<div class="b" style="left:50px;top:468px;width:81px;height:19px;background:#fff;box-shadow:inset 1px 1px 0 #808080, inset -1px -1px 0 #fff, inset 2px 2px 0 #000, inset -2px -2px 0 #dfdfdf;"></div>
<div class="t" style="top:472px;color:#000;font-size:12px;font-weight:700;letter-spacing:0.6px;left:-9px;width:200px;text-align:center;">12</div>
<div class="t" style="top:473px;color:#000;font-size:12px;font-weight:400;letter-spacing:-0.5px;left:136px;">MHz</div>
<div class="b" style="left:44px;top:492px;width:40px;height:17px;background:#c0c0c0;box-shadow:inset 1px 1px 0 #fff, inset -1px -1px 0 #000, inset -2px -2px 0 #808080;"></div>
<div class="t" style="top:495px;color:#000;font-size:12px;font-weight:400;letter-spacing:-0.5px;left:-36px;width:200px;text-align:center;">Full</div>
<div class="b" style="left:92px;top:492px;width:40px;height:17px;background:#c0c0c0;box-shadow:inset 1px 1px 0 #fff, inset -1px -1px 0 #000, inset -2px -2px 0 #808080;"></div>
<div class="t" style="top:495px;color:#000;font-size:12px;font-weight:400;letter-spacing:-0.5px;left:12px;width:200px;text-align:center;">Save</div>
<div class="b" style="left:44px;top:512px;width:40px;height:17px;background:#c0c0c0;box-shadow:inset 1px 1px 0 #fff, inset -1px -1px 0 #000, inset -2px -2px 0 #808080;"></div>
<div class="t" style="top:515px;color:#000;font-size:12px;font-weight:400;letter-spacing:-0.5px;left:-36px;width:200px;text-align:center;">Zoom</div>
<div class="b" style="left:92px;top:512px;width:40px;height:17px;background:#c0c0c0;box-shadow:inset 1px 1px 0 #fff, inset -1px -1px 0 #000, inset -2px -2px 0 #808080;"></div>
<div class="t" style="top:516px;color:#fff;font-size:12px;font-weight:400;letter-spacing:-0.5px;left:13px;width:200px;text-align:center;">Recall</div>
<div class="t" style="top:515px;color:#808080;font-size:12px;font-weight:400;letter-spacing:-0.5px;left:12px;width:200px;text-align:center;">Recall</div>
<div class="b" style="left:176px;top:434px;width:70px;height:100px;border:1px solid #808080;border-width:1px 1px 1px 1px;box-shadow:inset 1px 1px 0 #fff, 1px 1px 0 #fff;box-sizing:border-box"></div>
<div class="b" style="left:182px;top:428px;width:43px;height:10px;background:#c0c0c0"></div>
<div class="t" style="top:429px;color:#000;font-size:12px;font-weight:400;letter-spacing:-0.5px;left:185px;">BANDS</div>
<div class="b" style="left:184px;top:451px;width:13px;height:13px;background:#fff;box-shadow:inset 1px 1px 0 #808080, inset -1px -1px 0 #fff, inset 2px 2px 0 #000, inset -2px -2px 0 #dfdfdf;"></div>
<div class="t" style="top:452px;color:#000;font-size:12px;font-weight:400;letter-spacing:-0.5px;left:202px;">HF</div>
<div class="b" style="left:184px;top:472px;width:13px;height:13px;background:#fff;box-shadow:inset 1px 1px 0 #808080, inset -1px -1px 0 #fff, inset 2px 2px 0 #000, inset -2px -2px 0 #dfdfdf;"></div>
<div class="t" style="top:473px;color:#000;font-size:12px;font-weight:400;letter-spacing:-0.5px;left:202px;">VHF</div>
<div class="b" style="left:258px;top:430px;width:296px;height:19px;background:#ffffc8;box-shadow:inset 1px 1px 0 #808080, inset -1px -1px 0 #fff, inset 2px 2px 0 #000, inset -2px -2px 0 #dfdfdf;"></div>
<div class="t" style="top:434px;color:#000;font-size:12px;font-weight:400;letter-spacing:-0.38px;left:261px;">D:\MyDocument\HAM\ANT\VertDP1.vec</div>
<div class="b" style="left:258px;top:459px;width:43px;height:75px;border:1px solid #808080;border-width:1px 1px 1px 1px;box-shadow:inset 1px 1px 0 #fff, 1px 1px 0 #fff;box-sizing:border-box"></div>
<div class="b" style="left:263px;top:463px;width:36px;height:21px;background:#fff;box-shadow:inset 1px 1px 0 #808080, inset -1px -1px 0 #fff, inset 2px 2px 0 #000, inset -2px -2px 0 #dfdfdf;"></div>
<div class="t" style="top:468px;color:#000;font-size:12px;font-weight:400;letter-spacing:-0.5px;left:181px;width:200px;text-align:center;">500</div>
<div class="t" style="top:485px;color:#000;font-size:12px;font-weight:400;letter-spacing:-0.5px;left:179px;width:200px;text-align:center;">Steps</div>
<div class="b" style="left:563px;top:434px;width:213px;height:100px;border:1px solid #808080;border-width:1px 1px 1px 1px;box-shadow:inset 1px 1px 0 #fff, 1px 1px 0 #fff;box-sizing:border-box"></div>
<div class="b" style="left:570px;top:428px;width:167px;height:10px;background:#c0c0c0"></div>
<div class="t" style="top:429px;color:#000;font-size:12px;font-weight:400;letter-spacing:-0.85px;left:573px;">TRACE ENABLE AND COLOURS</div>
<div class="t" style="top:450px;color:#ff0000;font-size:12px;font-weight:400;letter-spacing:-0.5px;right:171px;">SWR</div>
<div class="b" style="left:629px;top:449px;width:13px;height:13px;background:#ff0000;box-shadow:inset 1px 1px 0 #fff, inset 2px 2px 0 #dfdfdf, inset -1px -1px 0 #000, inset -2px -2px 0 #808080;"></div>
<div class="b" style="left:648px;top:448px;width:13px;height:13px;background:#fff;box-shadow:inset 1px 1px 0 #808080, inset -1px -1px 0 #fff, inset 2px 2px 0 #000, inset -2px -2px 0 #dfdfdf;"></div>
<svg class="b" style="left:648px;top:448px" width="13" height="13" viewBox="0 0 13 13" shape-rendering="crispEdges"><path d="M9 3h1v1h-1zM8 4h2v1h-2zM3 5h1v1h-1zM7 5h3v1h-3zM3 6h2v1h-2zM6 6h3v1h-3zM3 7h5v1h-5zM4 8h3v1h-3zM5 9h1v1h-1z" fill="#000"/></svg>
<div class="t" style="top:471px;color:#800080;font-size:12px;font-weight:400;letter-spacing:-0.5px;right:171px;">| Z | / ohm</div>
<div class="b" style="left:629px;top:470px;width:13px;height:13px;background:#800080;box-shadow:inset 1px 1px 0 #fff, inset 2px 2px 0 #dfdfdf, inset -1px -1px 0 #000, inset -2px -2px 0 #808080;"></div>
<div class="b" style="left:648px;top:470px;width:13px;height:13px;background:#fff;box-shadow:inset 1px 1px 0 #808080, inset -1px -1px 0 #fff, inset 2px 2px 0 #000, inset -2px -2px 0 #dfdfdf;"></div>
<svg class="b" style="left:648px;top:470px" width="13" height="13" viewBox="0 0 13 13" shape-rendering="crispEdges"><path d="M9 3h1v1h-1zM8 4h2v1h-2zM3 5h1v1h-1zM7 5h3v1h-3zM3 6h2v1h-2zM6 6h3v1h-3zM3 7h5v1h-5zM4 8h3v1h-3zM5 9h1v1h-1z" fill="#000"/></svg>
<div class="t" style="top:492px;color:#0000ff;font-size:12px;font-weight:400;letter-spacing:-0.5px;right:171px;">Loss / dB</div>
<div class="b" style="left:629px;top:491px;width:13px;height:13px;background:#0000ff;box-shadow:inset 1px 1px 0 #fff, inset 2px 2px 0 #dfdfdf, inset -1px -1px 0 #000, inset -2px -2px 0 #808080;"></div>
<div class="b" style="left:648px;top:491px;width:13px;height:13px;background:#fff;box-shadow:inset 1px 1px 0 #808080, inset -1px -1px 0 #fff, inset 2px 2px 0 #000, inset -2px -2px 0 #dfdfdf;"></div>
<svg class="b" style="left:648px;top:491px" width="13" height="13" viewBox="0 0 13 13" shape-rendering="crispEdges"><path d="M9 3h1v1h-1zM8 4h2v1h-2zM3 5h1v1h-1zM7 5h3v1h-3zM3 6h2v1h-2zM6 6h3v1h-3zM3 7h5v1h-5zM4 8h3v1h-3zM5 9h1v1h-1z" fill="#000"/></svg>
<div class="t" style="top:448px;color:#c06000;font-size:12px;font-weight:400;letter-spacing:-0.5px;right:68px;">PHASE /°</div>
<div class="b" style="left:732px;top:448px;width:13px;height:13px;background:#c06000;box-shadow:inset 1px 1px 0 #fff, inset 2px 2px 0 #dfdfdf, inset -1px -1px 0 #000, inset -2px -2px 0 #808080;"></div>
<div class="b" style="left:751px;top:447px;width:13px;height:13px;background:#fff;box-shadow:inset 1px 1px 0 #808080, inset -1px -1px 0 #fff, inset 2px 2px 0 #000, inset -2px -2px 0 #dfdfdf;"></div>
<svg class="b" style="left:751px;top:447px" width="13" height="13" viewBox="0 0 13 13" shape-rendering="crispEdges"><path d="M9 3h1v1h-1zM8 4h2v1h-2zM3 5h1v1h-1zM7 5h3v1h-3zM3 6h2v1h-2zM6 6h3v1h-3zM3 7h5v1h-5zM4 8h3v1h-3zM5 9h1v1h-1z" fill="#000"/></svg>
<div class="t" style="top:469px;color:#000000;font-size:12px;font-weight:400;letter-spacing:-0.5px;right:68px;">Rs / ohm</div>
<div class="b" style="left:732px;top:469px;width:13px;height:13px;background:#000000;box-shadow:inset 1px 1px 0 #fff, inset 2px 2px 0 #dfdfdf, inset -1px -1px 0 #000, inset -2px -2px 0 #808080;"></div>
<div class="b" style="left:751px;top:469px;width:13px;height:13px;background:#fff;box-shadow:inset 1px 1px 0 #808080, inset -1px -1px 0 #fff, inset 2px 2px 0 #000, inset -2px -2px 0 #dfdfdf;"></div>
<svg class="b" style="left:751px;top:469px" width="13" height="13" viewBox="0 0 13 13" shape-rendering="crispEdges"><path d="M9 3h1v1h-1zM8 4h2v1h-2zM3 5h1v1h-1zM7 5h3v1h-3zM3 6h2v1h-2zM6 6h3v1h-3zM3 7h5v1h-5zM4 8h3v1h-3zM5 9h1v1h-1z" fill="#000"/></svg>
<div class="t" style="top:491px;color:#008000;font-size:12px;font-weight:400;letter-spacing:-0.5px;right:68px;">| Xs | / ohm</div>
<div class="b" style="left:732px;top:491px;width:13px;height:13px;background:#008000;box-shadow:inset 1px 1px 0 #fff, inset 2px 2px 0 #dfdfdf, inset -1px -1px 0 #000, inset -2px -2px 0 #808080;"></div>
<div class="b" style="left:751px;top:490px;width:13px;height:13px;background:#fff;box-shadow:inset 1px 1px 0 #808080, inset -1px -1px 0 #fff, inset 2px 2px 0 #000, inset -2px -2px 0 #dfdfdf;"></div>
<svg class="b" style="left:751px;top:490px" width="13" height="13" viewBox="0 0 13 13" shape-rendering="crispEdges"><path d="M9 3h1v1h-1zM8 4h2v1h-2zM3 5h1v1h-1zM7 5h3v1h-3zM3 6h2v1h-2zM6 6h3v1h-3zM3 7h5v1h-5zM4 8h3v1h-3zM5 9h1v1h-1z" fill="#000"/></svg>
<div class="b" style="left:623px;top:514px;width:40px;height:17px;background:#c0c0c0;box-shadow:inset 1px 1px 0 #fff, inset -1px -1px 0 #000, inset -2px -2px 0 #808080;"></div>
<div class="t" style="top:517px;color:#000;font-size:12px;font-weight:400;letter-spacing:-0.5px;left:543px;width:200px;text-align:center;">All</div>
<div class="b" style="left:726px;top:514px;width:40px;height:17px;background:#c0c0c0;box-shadow:inset 1px 1px 0 #fff, inset -1px -1px 0 #000, inset -2px -2px 0 #808080;"></div>
<div class="t" style="top:517px;color:#000;font-size:12px;font-weight:400;letter-spacing:-0.5px;left:646px;width:200px;text-align:center;">None</div>
</body></html>
